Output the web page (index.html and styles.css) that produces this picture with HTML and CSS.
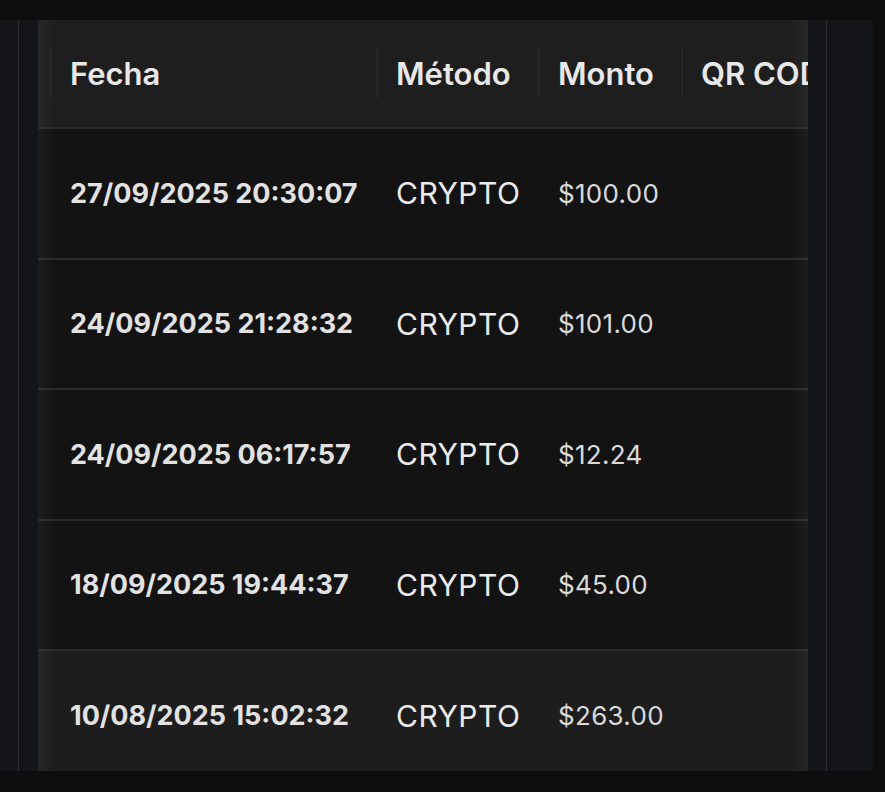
FILE: index.html
```html
<!DOCTYPE html>
<html lang="es">
<head>
    <meta charset="UTF-8">
    <meta name="viewport" content="width=device-width, initial-scale=1.0">
    <title>Historial de depósitos</title>
    <link rel="stylesheet" href="styles.css">
</head>
<body>
    <div class="frame">
        <div class="panel">
            <div class="table-wrap">
                <table class="historial">
                    <colgroup>
                        <col class="c-spacer">
                        <col class="c-fecha">
                        <col class="c-metodo">
                        <col class="c-monto">
                        <col class="c-qr">
                    </colgroup>
                    <thead>
                        <tr>
                            <th></th>
                            <th class="div">Fecha</th>
                            <th class="div">Método</th>
                            <th class="div">Monto</th>
                            <th class="div">QR CODE</th>
                        </tr>
                    </thead>
                    <tbody>
                        <tr>
                            <td></td>
                            <td class="fecha">27/09/2025 20:30:07</td>
                            <td class="metodo">CRYPTO</td>
                            <td class="monto">$100.00</td>
                            <td></td>
                        </tr>
                        <tr>
                            <td></td>
                            <td class="fecha">24/09/2025 21:28:32</td>
                            <td class="metodo">CRYPTO</td>
                            <td class="monto">$101.00</td>
                            <td></td>
                        </tr>
                        <tr>
                            <td></td>
                            <td class="fecha">24/09/2025 06:17:57</td>
                            <td class="metodo">CRYPTO</td>
                            <td class="monto">$12.24</td>
                            <td></td>
                        </tr>
                        <tr>
                            <td></td>
                            <td class="fecha">18/09/2025 19:44:37</td>
                            <td class="metodo">CRYPTO</td>
                            <td class="monto">$45.00</td>
                            <td></td>
                        </tr>
                        <tr class="activa">
                            <td></td>
                            <td class="fecha">10/08/2025 15:02:32</td>
                            <td class="metodo">CRYPTO</td>
                            <td class="monto">$263.00</td>
                            <td></td>
                        </tr>
                    </tbody>
                </table>
            </div>
        </div>
    </div>
</body>
</html>
```

FILE: styles.css
```css
body {
    margin: 0;
    background: #0e0e0e;
    font-family: Inter, "Noto Sans", sans-serif;
    color: #e6e6e6;
    height: 792px;
    overflow: hidden;
}
.frame {
    margin-top: 20px;
    width: 873px;
    height: 751px;
    background: #141519;
}
.panel {
    margin-left: 18px;
    height: 751px;
    border-left: 1px solid #2b2d32;
    border-right: 1px solid #2b2d32;
    padding: 0 18px 0 19px;
    box-sizing: content-box;
    width: 770px;
}
.table-wrap {
    position: relative;
    width: 770px;
    height: 751px;
    overflow: hidden;
}
.table-wrap::before,
.table-wrap::after {
    content: "";
    position: absolute;
    top: 0;
    bottom: 0;
    width: 18px;
    pointer-events: none;
    z-index: 2;
}
.table-wrap::before {
    left: 0;
    background: linear-gradient(to right, rgba(255, 255, 255, 0.045), rgba(255, 255, 255, 0));
}
.table-wrap::after {
    right: 0;
    background: linear-gradient(to left, rgba(255, 255, 255, 0.045), rgba(255, 255, 255, 0));
}
.historial {
    border-collapse: collapse;
    table-layout: fixed;
    width: 843px;
}
.c-spacer { width: 12px; }
.c-fecha { width: 326px; }
.c-metodo { width: 162px; }
.c-monto { width: 143px; }
.c-qr { width: 200px; }

.historial th {
    position: relative;
    height: 107px;
    padding: 0 0 0 20px;
    background: #1e1e1e;
    text-align: left;
    font-size: 31px;
    font-weight: 600;
    color: #e8e8e8;
    white-space: nowrap;
    overflow: hidden;
}
.historial th.div::before {
    content: "";
    position: absolute;
    left: 0;
    top: 28px;
    height: 50px;
    width: 2px;
    background: #272727;
}
.historial tbody tr {
    height: 130.5px;
    background: #131313;
    border-top: 2px solid #2a2a2a;
}
.historial tbody tr.activa {
    background: #1d1d1d;
}
.historial td {
    padding: 0 0 0 20px;
    white-space: nowrap;
}
.fecha {
    font-size: 27px;
    font-weight: 700;
    color: #e2e2e2;
}
.metodo {
    font-size: 30px;
    font-weight: 400;
    letter-spacing: 0.5px;
    color: #ebebeb;
}
.monto {
    font-size: 26px;
    font-weight: 400;
    letter-spacing: 0.3px;
    color: #dadada;
}
```
